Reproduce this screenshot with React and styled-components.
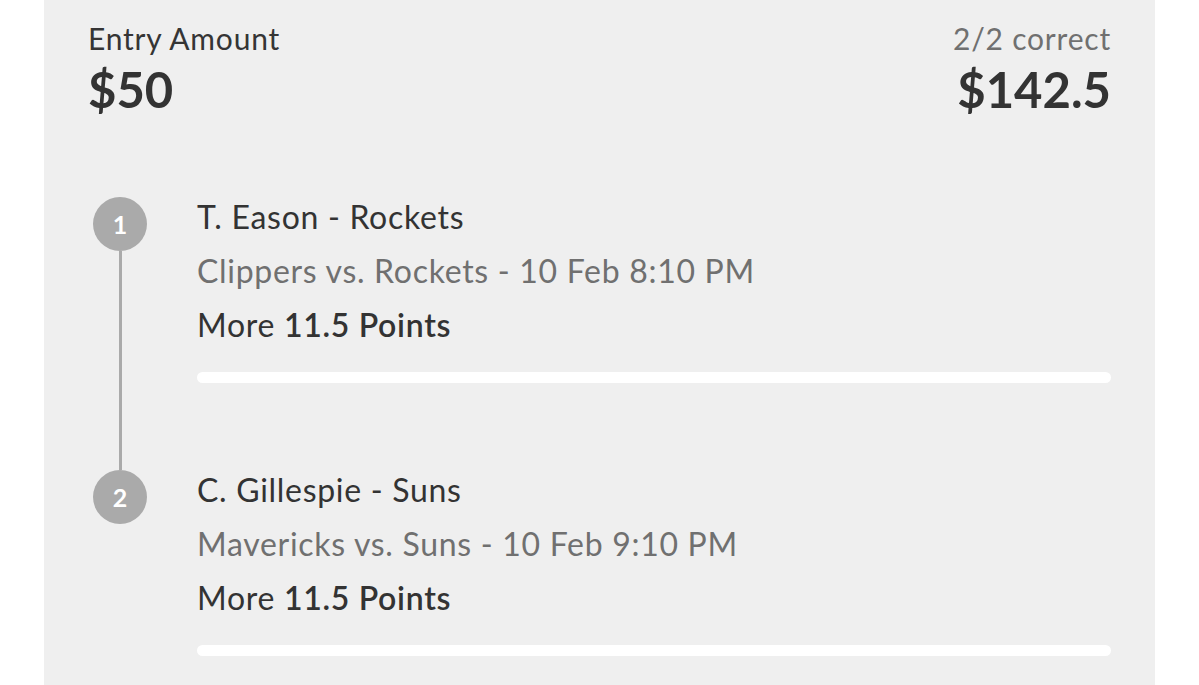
import styled, { createGlobalStyle } from 'styled-components';

const GlobalStyle = createGlobalStyle`
    body {
        margin: 0;
        background: #ffffff;
        font-family: Lato, "Noto Sans", sans-serif;
    }
`;

const Panel = styled.div`
    margin-left: 44px;
    width: 1111px;
    min-height: 100vh;
    box-sizing: border-box;
    padding: 20px 44px 0 44px;
    background: #efefef;
    color: #333333;
`;

const Header = styled.div`
    display: flex;
    justify-content: space-between;
`;

const HeaderBlock = styled.div`
    display: flex;
    flex-direction: column;
    align-items: ${(p) => (p.$right ? 'flex-end' : 'flex-start')};
`;

const Label = styled.div`
    font-size: 30px;
    line-height: 36px;
    letter-spacing: 0.8px;
    color: ${(p) => (p.$muted ? '#707070' : '#353535')};
`;

const Amount = styled.div`
    margin-top: 3px;
    font-size: 49px;
    line-height: 60px;
    font-weight: 700;
    color: #333333;
`;

const Picks = styled.div`
    margin-top: 78px;
`;

const Pick = styled.div`
    display: flex;
    padding-bottom: ${(p) => (p.$last ? '0' : '87px')};
`;

const Rail = styled.div`
    width: 54px;
    margin-left: 5px;
    display: flex;
    flex-direction: column;
    align-items: center;
    flex-shrink: 0;
`;

const Dot = styled.div`
    width: 54px;
    height: 54px;
    border-radius: 50%;
    background: #aaaaaa;
    color: #ffffff;
    font-size: 25px;
    font-weight: 700;
    display: flex;
    align-items: center;
    justify-content: center;
`;

const Line = styled.div`
    flex: 1;
    width: 3px;
    margin-bottom: -87px;
    background: #aaaaaa;
`;

const Body = styled.div`
    flex: 1;
    margin-left: 50px;
`;

const Player = styled.div`
    font-size: 32px;
    line-height: 40px;
    letter-spacing: 0.7px;
    color: #333333;
`;

const Info = styled.div`
    font-size: 32px;
    line-height: 54px;
    letter-spacing: 0.7px;
    color: ${(p) => (p.$muted ? '#707070' : '#333333')};

    &:first-of-type {
        margin-top: 7px;
    }
`;

const Strong = styled.span`
    font-weight: 600;
`;

const Track = styled.div`
    margin-top: 20px;
    height: 11px;
    border-radius: 6px;
    background: #ffffff;
`;

const picks = [
    { player: 'T. Eason - Rockets', game: 'Clippers vs. Rockets - 10 Feb 8:10 PM', pick: '11.5 Points' },
    { player: 'C. Gillespie - Suns', game: 'Mavericks vs. Suns - 10 Feb 9:10 PM', pick: '11.5 Points' },
];

const App = () => {
    return (
        <>
            <GlobalStyle />
            <Panel>
                <Header>
                    <HeaderBlock>
                        <Label>Entry Amount</Label>
                        <Amount>$50</Amount>
                    </HeaderBlock>
                    <HeaderBlock $right>
                        <Label $muted>2/2 correct</Label>
                        <Amount>$142.5</Amount>
                    </HeaderBlock>
                </Header>
                <Picks>
                    {picks.map((p, i) => {
                        const last = i === picks.length - 1;
                        return (
                            <Pick key={i} $last={last}>
                                <Rail>
                                    <Dot>{i + 1}</Dot>
                                    {!last && <Line />}
                                </Rail>
                                <Body>
                                    <Player>{p.player}</Player>
                                    <div>
                                        <Info $muted>{p.game}</Info>
                                        <Info>More <Strong>{p.pick}</Strong></Info>
                                    </div>
                                    <Track />
                                </Body>
                            </Pick>
                        );
                    })}
                </Picks>
            </Panel>
        </>
    );
};

export default App;
